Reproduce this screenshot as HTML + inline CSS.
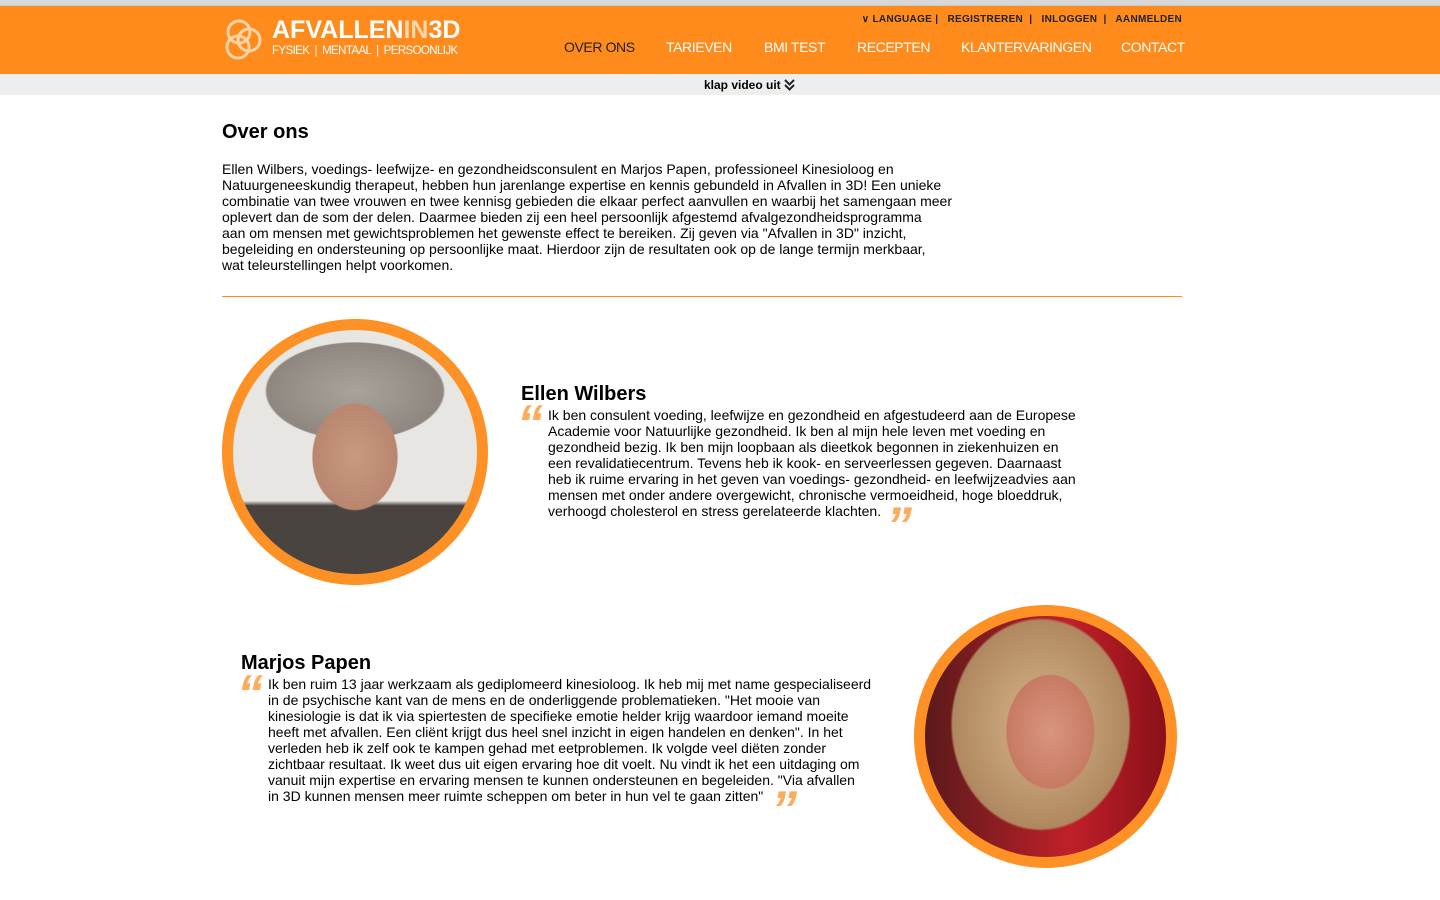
<!DOCTYPE html>
<html><head><meta charset="utf-8"><style>
*{margin:0;padding:0;box-sizing:border-box}
body{width:1440px;height:900px;background:#fff;font-family:"Liberation Sans",Arial,sans-serif;color:#000;position:relative;overflow:hidden}
.top{position:absolute;left:0;top:0;width:1440px;height:6px;background:#d8d8d8;border-bottom:1px solid #c8c8c8}
.hdr{position:absolute;left:0;top:6px;width:1440px;height:68px;background:#fe8b1b}
.bar{position:absolute;left:0;top:74px;width:1440px;height:21px;background:#efeeee;font-size:12px;font-weight:bold;line-height:22px}
.logo{position:absolute;left:272px;top:11px;color:#fff}
.logo .big{font-size:25px;font-weight:bold;line-height:26px}
.logo .big span{color:#fdd6ac}
.logo .small{font-size:11.5px;line-height:14px;margin-top:1px;letter-spacing:-0.6px}
.util{position:absolute;right:258px;top:8px;font-size:10px;font-weight:bold;color:#222;letter-spacing:0.3px}
.nav{position:absolute;top:33px;font-size:14px;color:#fff;letter-spacing:-0.4px}
h1{position:absolute;left:222px;top:121px;font-size:20px;font-weight:bold}
.intro{position:absolute;left:222px;top:161px;font-size:14px;line-height:16px;white-space:nowrap}
.hr{position:absolute;left:222px;top:296px;width:960px;height:1px;background:#fe8b1b}
.circ{position:absolute;border-radius:50%;border:11px solid #fd9125;overflow:hidden}
.name{position:absolute;font-size:20px;font-weight:bold}
.q{position:absolute;font-size:14px;line-height:16px;white-space:nowrap}
.qm{position:absolute;font-family:"Liberation Sans",sans-serif;font-size:52px;font-weight:bold;color:#fdab5c;line-height:52px;font-style:italic}
</style></head><body>
<div class="top"></div>
<div class="hdr">
<svg style="position:absolute;left:222px;top:12px" width="44" height="44" viewBox="0 0 44 44" fill="none" stroke="#fde0c0" stroke-width="3" opacity=".85"><circle cx="17" cy="14" r="11"/><circle cx="27" cy="22" r="11"/><circle cx="16" cy="29" r="11"/></svg>
<div class="logo"><div class="big">AFVALLEN<span>IN</span>3D</div><div class="small">FYSIEK &nbsp;| &nbsp;MENTAAL &nbsp;| &nbsp;PERSOONLIJK</div></div>
<div class="util">&#8744; LANGUAGE | &nbsp; REGISTREREN &nbsp;| &nbsp; INLOGGEN &nbsp;| &nbsp; AANMELDEN</div>
<div class="nav" style="left:564px;color:#222">OVER ONS</div>
<div class="nav" style="left:666px">TARIEVEN</div>
<div class="nav" style="left:764px">BMI TEST</div>
<div class="nav" style="left:857px">RECEPTEN</div>
<div class="nav" style="left:961px">KLANTERVARINGEN</div>
<div class="nav" style="left:1121px">CONTACT</div>
</div>
<div class="bar"><span style="position:absolute;left:704px;top:0">klap video uit</span><svg style="position:absolute;left:784px;top:5px" width="11" height="12" viewBox="0 0 11 12" fill="none" stroke="#222" stroke-width="2"><path d="M1 1l4.5 4.5L10 1M1 6l4.5 4.5L10 6"/></svg></div>
<h1>Over ons</h1>
<div class="intro">Ellen Wilbers, voedings- leefwijze- en gezondheidsconsulent en Marjos Papen, professioneel Kinesioloog en<br>Natuurgeneeskundig therapeut, hebben hun jarenlange expertise en kennis gebundeld in Afvallen in 3D! Een unieke<br>combinatie van twee vrouwen en twee kennisg gebieden die elkaar perfect aanvullen en waarbij het samengaan meer<br>oplevert dan de som der delen. Daarmee bieden zij een heel persoonlijk afgestemd afvalgezondheidsprogramma<br>aan om mensen met gewichtsproblemen het gewenste effect te bereiken. Zij geven via "Afvallen in 3D" inzicht,<br>begeleiding en ondersteuning op persoonlijke maat. Hierdoor zijn de resultaten ook op de lange termijn merkbaar,<br>wat teleurstellingen helpt voorkomen.</div>
<div class="hr"></div>
<div class="circ" style="left:222px;top:319px;width:266px;height:266px;background:radial-gradient(ellipse 60px 75px at 50% 52%,#c99a7f 0,#b98670 70%,transparent 72%),radial-gradient(ellipse 110px 60px at 50% 25%,#a9a39b 0,#8f877f 80%,transparent 82%),linear-gradient(#e8e6e3,#e8e6e3 70%,#4a4440 72%)"></div>
<div class="name" style="left:521px;top:383px">Ellen Wilbers</div>
<div class="qm" style="left:517px;top:398px">“</div>
<div class="q" style="left:548px;top:407px">Ik ben consulent voeding, leefwijze en gezondheid en afgestudeerd aan de Europese<br>Academie voor Natuurlijke gezondheid. Ik ben al mijn hele leven met voeding en<br>gezondheid bezig. Ik ben mijn loopbaan als dieetkok begonnen in ziekenhuizen en<br>een revalidatiecentrum. Tevens heb ik kook- en serveerlessen gegeven. Daarnaast<br>heb ik ruime ervaring in het geven van voedings- gezondheid- en leefwijzeadvies aan<br>mensen met onder andere overgewicht, chronische vermoeidheid, hoge bloeddruk,<br>verhoogd cholesterol en stress gerelateerde klachten.</div>
<div class="qm" style="left:886px;top:500px">”</div>
<div class="name" style="left:241px;top:652px">Marjos Papen</div>
<div class="qm" style="left:237px;top:668px">“</div>
<div class="q" style="left:268px;top:676px">Ik ben ruim 13 jaar werkzaam als gediplomeerd kinesioloog. Ik heb mij met name gespecialiseerd<br>in de psychische kant van de mens en de onderliggende problematieken. "Het mooie van<br>kinesiologie is dat ik via spiertesten de specifieke emotie helder krijg waardoor iemand moeite<br>heeft met afvallen. Een cliënt krijgt dus heel snel inzicht in eigen handelen en denken". In het<br>verleden heb ik zelf ook te kampen gehad met eetproblemen. Ik volgde veel diëten zonder<br>zichtbaar resultaat. Ik weet dus uit eigen ervaring hoe dit voelt. Nu vindt ik het een uitdaging om<br>vanuit mijn expertise en ervaring mensen te kunnen ondersteunen en begeleiden. "Via afvallen<br>in 3D kunnen mensen meer ruimte scheppen om beter in hun vel te gaan zitten"</div>
<div class="qm" style="left:771px;top:784px">”</div>
<div class="circ" style="left:914px;top:605px;width:263px;height:263px;background:radial-gradient(ellipse 62px 80px at 52% 48%,#d9967d 0,#c77a63 70%,transparent 72%),radial-gradient(ellipse 110px 130px at 48% 45%,#d7b48a 0,#b08860 80%,transparent 82%),linear-gradient(90deg,#5a1a1a,#c0202a 60%,#8a1018)"></div>
</body></html>
